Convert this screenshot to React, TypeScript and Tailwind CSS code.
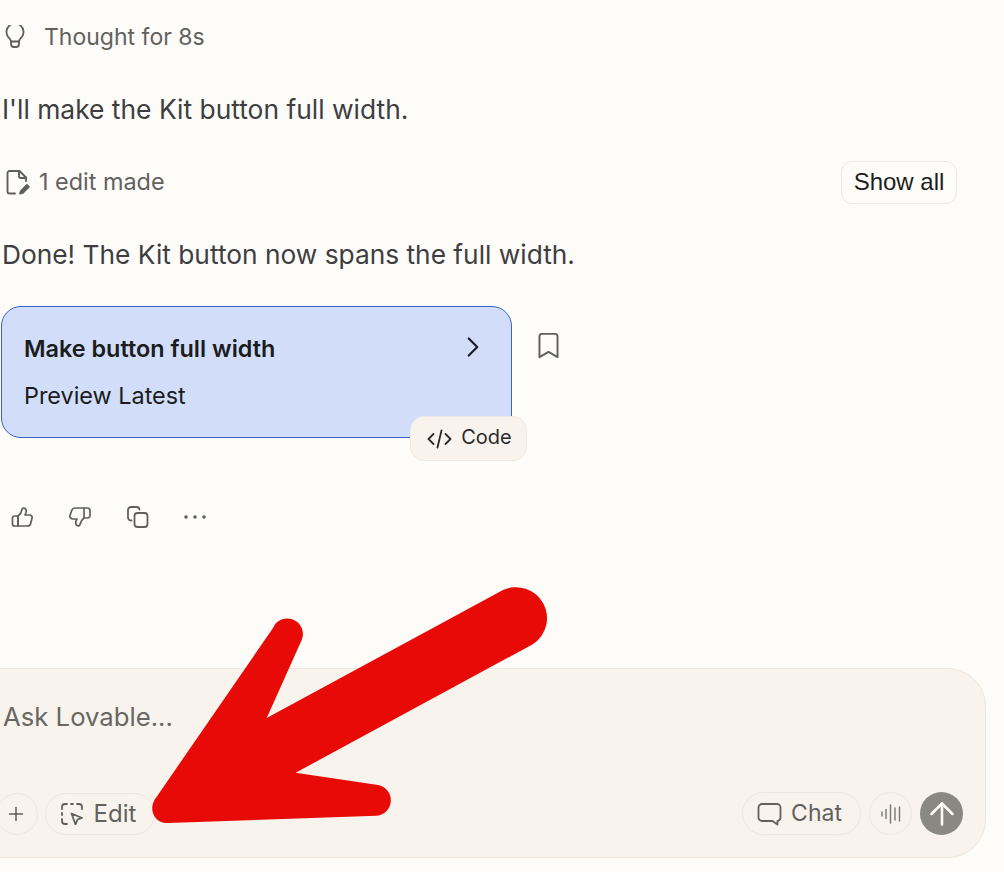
import { ChevronRight, Bookmark, Plus, ArrowUp } from "lucide-react";

const S = { fill: "none", stroke: "currentColor", strokeLinecap: "round" as const, strokeLinejoin: "round" as const };

function Bulb() {
  return (
    <svg width="20" height="24" viewBox="0 0 20 24" {...S} strokeWidth="1.8">
      <path d="M6 16.500c0-1.800-1.200-2.800-3-4.700A8.500 8.500 0 1 1 17 11.800c-1.800 1.900-3 2.900-3 4.700z" />
      <path d="M6 16.500v2.500a3 3 0 0 0 3 3h2a3 3 0 0 0 3-3v-2.500" />
    </svg>
  );
}

function FileEdit() {
  return (
    <svg width="26" height="26" viewBox="0 0 26 26" {...S} stroke="#5f5f5d" strokeWidth="1.9">
      <path d="M11 24.500H5.500a2 2 0 0 1-2-2V4a2 2 0 0 1 2-2h10l6.500 6.500V12" />
      <path d="M15 2v5a2 2 0 0 0 2 2h5" />
      <path d="M17 22l6-6 1.800 1.800-6 6-2.800.8z" fill="#5f5f5d" />
    </svg>
  );
}

function EditIcon() {
  return (
    <svg width="22" height="22" viewBox="0 0 22 22" {...S} stroke="#5f5f5d" strokeWidth="1.8">
      <path d="M1 6V4a3 3 0 0 1 3-3h2M10 1h2M16 1h2a3 3 0 0 1 3 3v2M1 10v2M1 16v2a3 3 0 0 0 3 3h2" />
      <path d="M10.500 10.500l10.500 4.500-4.500 1.500-2 5z" />
    </svg>
  );
}

function Wave() {
  return (
    <svg width="20" height="20" viewBox="0 0 20 20" {...S} stroke="#777672" strokeWidth="1.4">
      <path d="M1 8v4M5 5.500v9M9.500 1v18M14 4v12M18.500 3v14" />
    </svg>
  );
}

function ThumbUp() {
  return (
    <svg width="24" height="24" viewBox="0 0 24 24" {...S} strokeWidth="1.7">
      <path d="M8 11c2-1.500 3.500-3.500 4-6.500.3-2 3.800-2 4.200.8.300 1.700-.6 3.700-1.200 4.700h4.500c2 0 3 1.600 2.500 3.300l-1.500 5.700c-.4 1.500-1.500 2-3 2H8z" />
      <path d="M8 11H4.500A2 2 0 0 0 2.500 13v6a2 2 0 0 0 2 2H8z" />
    </svg>
  );
}

function ThumbDown() {
  return (
    <svg width="24" height="24" viewBox="0 0 24 24" {...S} strokeWidth="1.7">
      <path d="M16 13c-2 1.500-3.500 3.500-4 6.500-.3 2-3.800 2-4.200-.8-.3-1.700.6-3.700 1.200-4.700H5c-2.200 0-3.500-1.800-3-3.600L3.500 6C4 4.300 5 3 7 3h9z" />
      <path d="M16 3h3.500a2.500 2.500 0 0 1 2.500 2.500v5a2.500 2.500 0 0 1-2.500 2.500H16" />
    </svg>
  );
}

function CopyIcon() {
  return (
    <svg width="24" height="24" viewBox="0 0 24 24" {...S} strokeWidth="1.8">
      <rect x="8.500" y="8" width="13" height="14" rx="3" />
      <path d="M5.500 15.500H5a3 3 0 0 1-3-3V5a3 3 0 0 1 3-3h5.500a3 3 0 0 1 3 2.500" />
    </svg>
  );
}

function Dots() {
  return (
    <svg width="24" height="24" viewBox="0 0 24 24" fill="currentColor">
      <circle cx="2" cy="12" r="1.800" />
      <circle cx="11" cy="12" r="1.800" />
      <circle cx="20" cy="12" r="1.800" />
    </svg>
  );
}

function Bubble() {
  return (
    <svg width="25" height="24" viewBox="0 0 25 24" {...S} strokeWidth="1.8">
      <path d="M5 2h15a3.500 3.500 0 0 1 3.500 3.500v10A3.500 3.500 0 0 1 20.500 19v3.500l-5-3.500H5a3.500 3.500 0 0 1-3.500-3.500v-10A3.500 3.500 0 0 1 5 2z" />
    </svg>
  );
}

function CodeGlyph() {
  return (
    <svg width="25" height="20" viewBox="0 0 25 20" {...S} strokeWidth="1.8">
      <path d="M6.500 5L1.500 10l5 5M18.500 5l5 5-5 5M14.500 1.500L10.500 18.500" />
    </svg>
  );
}

export default function App() {
  return (
    <div className="relative h-[872px] w-[1004px] overflow-hidden bg-[#fdfcf9] font-['Inter',sans-serif]">
      <div className="flex h-full flex-col pl-[2px]">
        <div className="mt-[25px] flex h-[24px] items-center gap-[19px] pl-[3px] text-[23px] text-[#62615e]">
          <span className="text-[#5f5f5d]"><Bulb /></span>
          <span>Thought for 8s</span>
        </div>

        <p className="mt-[46px] h-[28px] text-[26.400px] leading-[28px] text-[#3e3e42]">I'll make the Kit button full width.</p>

        <div className="mt-[38px] flex h-[42px] items-center justify-between pr-[47px]">
          <div className="flex items-center gap-[9px] pl-[2px] text-[23.400px] text-[#62615e]">
            <FileEdit />
            <span>1 edit made</span>
          </div>
          <button className="h-[43px] w-[116px] rounded-[11px] border border-[#ebe9e3] bg-[#fdfcf9] font-['Liberation_Sans',sans-serif] text-[24px] text-[#1e1e1e]">Show all</button>
        </div>

        <p className="mt-[38px] h-[28px] text-[26.300px] leading-[28px] text-[#3e3e42]">Done! The Kit button now spans the full width.</p>

        <div className="relative mt-[37px] flex items-start">
          <div className="ml-[-1px] h-[132px] w-[511px] rounded-[20px] border border-[#3c62c4] bg-[#d2def9] pl-[22px] pr-[21px] pt-[27px] text-[#1a1c20]">
            <div className="flex h-[30px] items-center justify-between">
              <span className="text-[23.400px] font-semibold leading-[30px]">Make button full width</span>
              <ChevronRight size={34} strokeWidth={1.5} className="-mt-[4px]" />
            </div>
            <div className="mt-[17px] text-[23.400px] leading-[30px]">Preview Latest</div>
          </div>
          <Bookmark size={31} strokeWidth={1.5} className="ml-[21px] mt-[24px] text-[#5f5f5d]" />
          <div className="absolute left-[408px] top-[110px] flex h-[45px] w-[117px] items-center justify-center gap-[9px] rounded-[14px] border border-[#efebe3] bg-[#f8f4ed] pl-[2px] text-[20px] text-[#2a2a2a]">
            <CodeGlyph />
            <span className="-mt-[3px]">Code</span>
          </div>
        </div>

        <div className="mt-[67px] flex items-center gap-[34px] pl-[8px] text-[#5f5f5d]">
          <ThumbUp />
          <ThumbDown />
          <CopyIcon />
          <Dots />
        </div>

        <div className="ml-[-40px] mr-[18px] mt-[139px] flex h-[190px] flex-col justify-between rounded-[38px] border border-[#ece8df] bg-[#f8f4ed] pb-[22px] pl-[33px] pr-[22px] pt-[32px]">
          <div className="pl-[7px] text-[25.700px] leading-[32px] text-[#686763]">Ask Lovable...</div>
          <div className="flex items-center justify-between">
            <div className="flex items-center gap-[7px]">
              <div className="flex size-[42px] items-center justify-center rounded-full border border-[#ece8df] text-[#5f5f5d]">
                <Plus size={22} strokeWidth={1.7} className="-ml-[2px]" />
              </div>
              <div className="flex h-[42px] w-[110px] items-center justify-center gap-[11px] rounded-full border border-[#ece8df] pr-[3px] text-[24px] text-[#62615e]">
                <EditIcon />
                <span>Edit</span>
              </div>
            </div>
            <div className="flex items-center gap-[8px]">
              <div className="flex h-[43px] w-[119px] items-center justify-center gap-[9px] rounded-full border border-[#ece8df] pr-[4px] text-[23px] text-[#62615e]">
                <Bubble />
                <span>Chat</span>
              </div>
              <div className="flex size-[43px] items-center justify-center rounded-full border border-[#ece8df]">
                <Wave />
              </div>
              <div className="flex size-[43px] items-center justify-center rounded-full bg-[#898883] text-[#fdfcf9]">
                <ArrowUp size={36} strokeWidth={1.7} />
              </div>
            </div>
          </div>
        </div>
      </div>

      <svg className="absolute left-0 top-0" width="1004" height="872" viewBox="0 0 1004 872">
        <path
          fill="#e80a06"
          d="M273 628 A15.500 15.500 0 0 1 301.700 640 L266.700 718 L503 590 A31 31 0 0 1 532.800 644.200 L295.700 772.700 L378 785 A15.500 15.500 0 0 1 376.700 815.700 L168 823 C154 824 147 808 156.700 796.700 Z"
        />
      </svg>
    </div>
  );
}
